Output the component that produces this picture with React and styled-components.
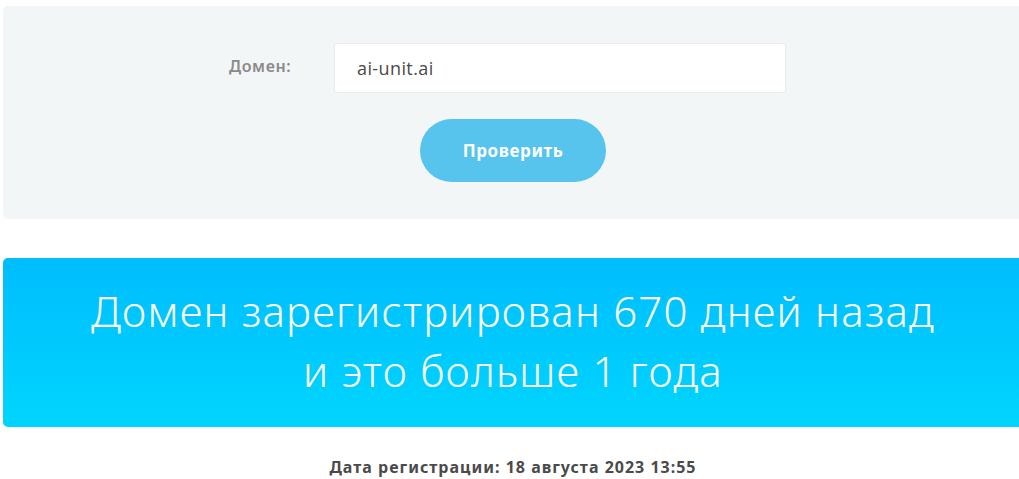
import React, { useState } from "react";
import styled, { createGlobalStyle } from "styled-components";

const GlobalStyle = createGlobalStyle`
  html, body {
    margin: 0;
    padding: 0;
    background: #ffffff;
    overflow: hidden;
  }
  body {
    font-family: "Open Sans", "Liberation Sans", sans-serif;
  }
`;

const Page = styled.div`
  width: 1020px;
  margin-left: 3px;
  padding-top: 6px;
`;

const CheckPanel = styled.form`
  background: #f3f6f7;
  border-radius: 5px;
  height: 213px;
  box-sizing: border-box;
  padding-top: 37px;
  display: flex;
  flex-direction: column;
  align-items: center;
`;

const FieldRow = styled.div`
  display: grid;
  grid-template-columns: 105px 452px;
  align-items: center;
  margin-left: -11px;
`;

const Label = styled.label`
  font-family: "Noto Sans", "DejaVu Sans", sans-serif;
  font-weight: 600;
  font-size: 16px;
  letter-spacing: 0.6px;
  color: #8a8a8a;
  margin-top: -4px;
`;

const Input = styled.input`
  height: 50px;
  box-sizing: border-box;
  border: 1px solid #e9ebec;
  border-radius: 3px;
  background: #fff;
  padding: 0 22px;
  font-family: "Open Sans", sans-serif;
  font-size: 18px;
  letter-spacing: 0.4px;
  color: #4a4a4a;
  outline: none;
`;

const SubmitButton = styled.button`
  margin-top: 26px;
  width: 186px;
  height: 63px;
  border: none;
  border-radius: 32px;
  background: #56c4ec;
  color: #fff;
  font-family: "Noto Sans", "DejaVu Sans", sans-serif;
  font-weight: 700;
  font-size: 17px;
  letter-spacing: 0.6px;
  cursor: pointer;
`;

const ResultBanner = styled.div`
  margin-top: 39px;
  height: 169px;
  border-radius: 5px;
  background: linear-gradient(180deg, #00bdfe 0%, #00d5fd 100%);
  display: flex;
  flex-direction: column;
  align-items: center;
  justify-content: center;
  color: #fff;
  font-family: "Noto Sans", "DejaVu Sans", sans-serif;
  font-weight: 300;
  font-size: 42px;
  letter-spacing: 1.2px;
  line-height: 60px;
  text-align: center;
  padding-bottom: 4px;
  box-sizing: border-box;
`;

const RegDate = styled.div`
  margin-top: 29px;
  text-align: center;
  font-family: "Noto Sans", "DejaVu Sans", sans-serif;
  font-weight: 700;
  font-size: 16px;
  letter-spacing: 1px;
  color: #4a4a4a;
`;

export default function App() {
  const [domain, setDomain] = useState("ai-unit.ai");
  return (
    <>
      <GlobalStyle />
      <Page>
        <CheckPanel onSubmit={(e) => e.preventDefault()}>
          <FieldRow>
            <Label htmlFor="domain">Домен:</Label>
            <Input
              id="domain"
              value={domain}
              onChange={(e) => setDomain(e.target.value)}
            />
          </FieldRow>
          <SubmitButton type="submit">Проверить</SubmitButton>
        </CheckPanel>
        <ResultBanner>
          <div>Домен зарегистрирован 670 дней назад</div>
          <div>и это больше 1 года</div>
        </ResultBanner>
        <RegDate>Дата регистрации: 18 августа 2023 13:55</RegDate>
      </Page>
    </>
  );
}
